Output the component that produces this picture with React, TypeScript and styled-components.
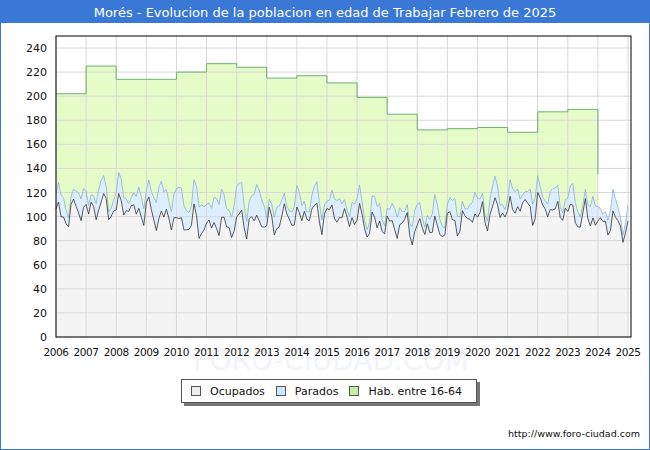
import React from "react";
import styled, { createGlobalStyle } from "styled-components";

const Global = createGlobalStyle`
  html, body { margin: 0; padding: 0; background: #fff; }
  body { font-family: "DejaVu Sans", "Liberation Sans", sans-serif; }
`;

const Frame = styled.div`
  width: 650px; height: 450px; box-sizing: border-box;
  border: 1px solid #3a78d6; display: flex; flex-direction: column; position: relative;
`;
const Header = styled.div`
  height: 22px; background: #3a78d6; color: #fff; font-size: 13px;
  display: flex; align-items: center; justify-content: center; flex-shrink: 0;
`;
const Legend = styled.div`
  position: absolute; left: 180px; top: 378px;
  display: flex; gap: 0; align-items: center; height: 22px; padding: 0 6px;
  border: 1px solid #555; background: #fff; box-shadow: 3px 3px 0 #777;
  font-size: 11px; color: #111;
`;
const Item = styled.div`
  display: flex; align-items: center; gap: 9px; margin: 0 8px 0 3px;
`;
const Swatch = styled.span<{ $c: string }>`
  width: 8px; height: 8px; border: 1px solid #555; background: ${p => p.$c};
`;
const Url = styled.div`
  position: absolute; right: 9px; bottom: 10px; font-size: 9.5px; color: #111;
`;

const X0 = 55, X1 = 627, Y0 = 337, SC = 289 / 240;
const xOf = (t: number) => X0 + ((t - 2006) / 19) * (X1 - X0);
const yOf = (v: number) => Y0 - v * SC;

const hab: [number, number, number][] = [
  [2006, 2007, 202], [2007, 2008, 225], [2008, 2010, 214], [2010, 2011, 220], [2011, 2012, 227],
  [2012, 2013, 224], [2013, 2014, 215], [2014, 2015, 217], [2015, 2016, 211], [2016, 2017, 199],
  [2017, 2018, 185], [2018, 2019, 172], [2019, 2020, 173], [2020, 2021, 174], [2021, 2022, 170],
  [2022, 2023, 187], [2023, 2024, 189],
];

function gen() {
  const occ: [number, number][] = [], par: [number, number][] = [];
  for (let i = 0; i <= 228; i++) {
    const t = 2006 + i / 12;
    let base = 100 + 8 * Math.sin((t - 2006) * 0.9);
    if (t > 2012.8 && t < 2017) base -= 6;
    if (t > 2017 && t < 2019) base -= 2;
    const season = 12 * Math.sin(i * Math.PI / 3 + 0.5) * (0.6 + 0.4 * Math.sin(i * 0.37));
    const noise = 4 * Math.sin(i * 2.3) + 3 * Math.cos(i * 1.7);
    const o = Math.max(75, base + season + noise);
    const p = o + 12 + 6 * Math.sin(i * 0.8) + (t > 2009 && t < 2013 ? 8 : 0);
    occ.push([xOf(t), yOf(o)]); par.push([xOf(t), yOf(p)]);
  }
  return { occ, par };
}

export default function App() {
  const { occ, par } = gen();
  const habPts: string[] = [];
  hab.forEach(([a, b, v]) => { habPts.push(`${xOf(a)},${yOf(v)}`, `${xOf(b)},${yOf(v)}`); });
  habPts.push(`${xOf(2024)},${yOf(135)}`);
  const habArea = `M${xOf(2006)},${Y0} L${habPts.join(" L")} L${xOf(2024)},${Y0} Z`;
  const habLine = `M${habPts.join(" L")}`;
  const line = (pts: [number, number][]) => "M" + pts.map(p => p.join(",")).join(" L");
  const area = (pts: [number, number][]) => `${line(pts)} L${pts[pts.length - 1][0]},${Y0} L${pts[0][0]},${Y0} Z`;
  const years = Array.from({ length: 20 }, (_, i) => 2006 + i);
  const ticks = Array.from({ length: 13 }, (_, i) => i * 20);
  return (
    <>
      <Global />
      <Frame>
        <Header>Morés - Evolucion de la poblacion en edad de Trabajar Febrero de 2025</Header>
        <svg width="648" height="426" viewBox="0 23 648 426" style={{ display: "block" }}>
          <text x="330" y="370" fontSize="28" fill="#f3f4fb" textAnchor="middle" fontFamily="DejaVu Sans">FORO-CIUDAD.COM</text>
          <rect x={X0} y={36} width={630 - X0} height={Y0 - 36} fill="#fff" />
          <path d={habArea} fill="#e6fcc8" />
          <path d={area(par)} fill="#ddeeff" />
          <path d={area(occ)} fill="#f4f4f4" />
          {ticks.map(v => <line key={v} x1={X0} x2={630} y1={yOf(v)} y2={yOf(v)} stroke="#d8d8d8" />)}
          {years.map(y => <line key={y} x1={xOf(y)} x2={xOf(y)} y1={36} y2={Y0} stroke="#d8d8d8" />)}
          <path d={habLine} fill="none" stroke="#6fb06f" strokeWidth="1" />
          <path d={line(par)} fill="none" stroke="#8ab0d8" strokeWidth="0.8" />
          <path d={line(occ)} fill="none" stroke="#333" strokeWidth="0.8" />
          <rect x={X0} y={36} width={630 - X0} height={Y0 - 36} fill="none" stroke="#000" />
          {ticks.map(v => <text key={v} x={46} y={yOf(v) + 4} fontSize="11" textAnchor="end" fill="#111">{v}</text>)}
          {years.map(y => <text key={y} x={xOf(y)} y={356} fontSize="10.5" letterSpacing="-0.4" textAnchor="middle" fill="#111">{y}</text>)}
        </svg>
        <Legend>
          <Item><Swatch $c="#eeeeee" />Ocupados</Item>
          <Item><Swatch $c="#cde6ff" />Parados</Item>
          <Item><Swatch $c="#c6f0a0" />Hab. entre 16-64</Item>
        </Legend>
        <Url>http://www.foro-ciudad.com</Url>
      </Frame>
    </>
  );
}
